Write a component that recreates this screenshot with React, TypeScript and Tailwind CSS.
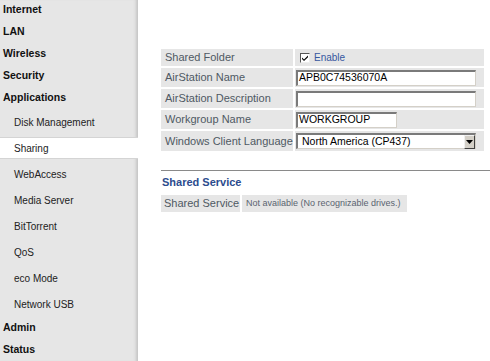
import React from 'react';

const topItems = ['Internet', 'LAN', 'Wireless', 'Security', 'Applications'];
const subItems = ['Disk Management', 'Sharing', 'WebAccess', 'Media Server', 'BitTorrent', 'QoS', 'eco Mode', 'Network USB'];

const TopItem: React.FC<{ label: string; first?: boolean }> = ({ label, first }) => (
  <div className={`flex h-[22px] items-center pl-[3px] text-[10.5px] font-bold text-[#111] ${first ? '-mt-[1px]' : ''}`}>
    {label}
  </div>
);

const SubItem: React.FC<{ label: string; active?: boolean }> = ({ label, active }) => (
  <div
    className={`my-[3px] flex h-[20px] items-center pl-[14px] text-[10px] text-[#222] ${
      active ? 'bg-white shadow-[0_1px_0_#d4d4d4,0_-1px_0_#d4d4d4]' : ''
    }`}
  >
    {label}
  </div>
);

const Inset: React.FC<{ className?: string; children?: React.ReactNode }> = ({ className, children }) => (
  <div
    className={`flex h-[16px] items-center whitespace-nowrap border-t-2 border-l-2 border-b border-r border-t-[#7a7a7a] border-l-[#7a7a7a] border-b-[#d4d0c8] border-r-[#d4d0c8] bg-white pl-[1px] text-[10.5px] text-black ${className ?? ''}`}
  >
    {children}
  </div>
);

const Label: React.FC<{ h: string; children: React.ReactNode }> = ({ h, children }) => (
  <div className={`flex ${h} items-center whitespace-nowrap bg-[#e6e6e6] pl-[4px]`}>{children}</div>
);

export default function App() {
  return (
    <div className="flex h-[361px] w-[490px] overflow-hidden bg-white font-['Liberation_Sans',Arial,sans-serif]">
      {/* Side menu */}
      <aside className="flex w-[138px] shrink-0 flex-col bg-[#e6e6e6] shadow-[inset_-4px_0_3px_-2px_#c4c4c4]">
        {topItems.map((t, i) => (
          <TopItem key={t} label={t} first={i === 0} />
        ))}
        {subItems.map((s) => (
          <SubItem key={s} label={s} active={s === 'Sharing'} />
        ))}
        <TopItem label="Admin" />
        <TopItem label="Status" />
      </aside>

      {/* Content */}
      <main className="flex-1 pt-[49px]">
        <div className="ml-[23px] grid w-[323px] grid-cols-[132px_189px] gap-[2px] text-[11px] text-[#4f5963]">
          <Label h="h-[17px]">Shared Folder</Label>
          <div className="flex h-[17px] items-center bg-[#e6e6e6] pl-[5px]">
            <span className="relative mr-[4px] h-[10px] w-[10px] border-t border-l border-t-[#555] border-l-[#555] border-b border-r border-b-[#eee] border-r-[#eee] bg-white">
              <svg viewBox="0 0 8 8" className="absolute left-0 top-0 h-[8px] w-[8px]">
                <path d="M1 3.5 L3 5.5 L7 1.5 L7 3.2 L3 7 L1 5 Z" fill="#000" />
              </svg>
            </span>
            <span className="text-[10px] text-[#3557a0]">Enable</span>
          </div>

          <Label h="h-[19px]">AirStation Name</Label>
          <div className="flex h-[19px] items-center bg-[#e6e6e6] pl-[1px]">
            <Inset className="w-[180px]">APB0C74536070A</Inset>
          </div>

          <Label h="h-[19px]">AirStation Description</Label>
          <div className="flex h-[19px] items-center bg-[#e6e6e6] pl-[1px]">
            <Inset className="w-[180px]" />
          </div>

          <Label h="h-[19px]">Workgroup Name</Label>
          <div className="flex h-[19px] items-center bg-[#e6e6e6] pl-[1px]">
            <Inset className="w-[101px]">WORKGROUP</Inset>
          </div>

          <Label h="h-[20px]">Windows Client Language</Label>
          <div className="flex h-[20px] items-center bg-[#e6e6e6] pl-[1px]">
            <Inset className="w-[180px] justify-between">
              <span className="pl-[3px]">North America (CP437)</span>
              <span className="flex h-[14px] w-[11px] items-center justify-center border border-t-[#f0f0f0] border-l-[#f0f0f0] border-b-[#404040] border-r-[#404040] bg-[#d4d0c8]">
                <svg viewBox="0 0 7 4" className="h-[4px] w-[7px]">
                  <path d="M0 0 H7 L3.5 4 Z" fill="#000" />
                </svg>
              </span>
            </Inset>
          </div>
        </div>

        <div className="mt-[19px] ml-[23px] h-[1px] bg-[#8a8a8a]" />

        <div className="ml-[24px] mt-[4px] h-[14px] whitespace-nowrap text-[11px] font-bold leading-[14px] text-[#2c4c8e]">
          Shared Service
        </div>

        <div className="ml-[23px] mt-[6px] flex gap-[2px] text-[#4f5963]">
          <div className="flex h-[17px] w-[79px] items-center whitespace-nowrap bg-[#e6e6e6] pl-[3px] text-[11px]">
            Shared Service
          </div>
          <div className="flex h-[17px] w-[165px] items-center whitespace-nowrap bg-[#e6e6e6] pl-[4px] text-[9px] text-[#5a6470]">
            Not available (No recognizable drives.)
          </div>
        </div>
      </main>
    </div>
  );
}
